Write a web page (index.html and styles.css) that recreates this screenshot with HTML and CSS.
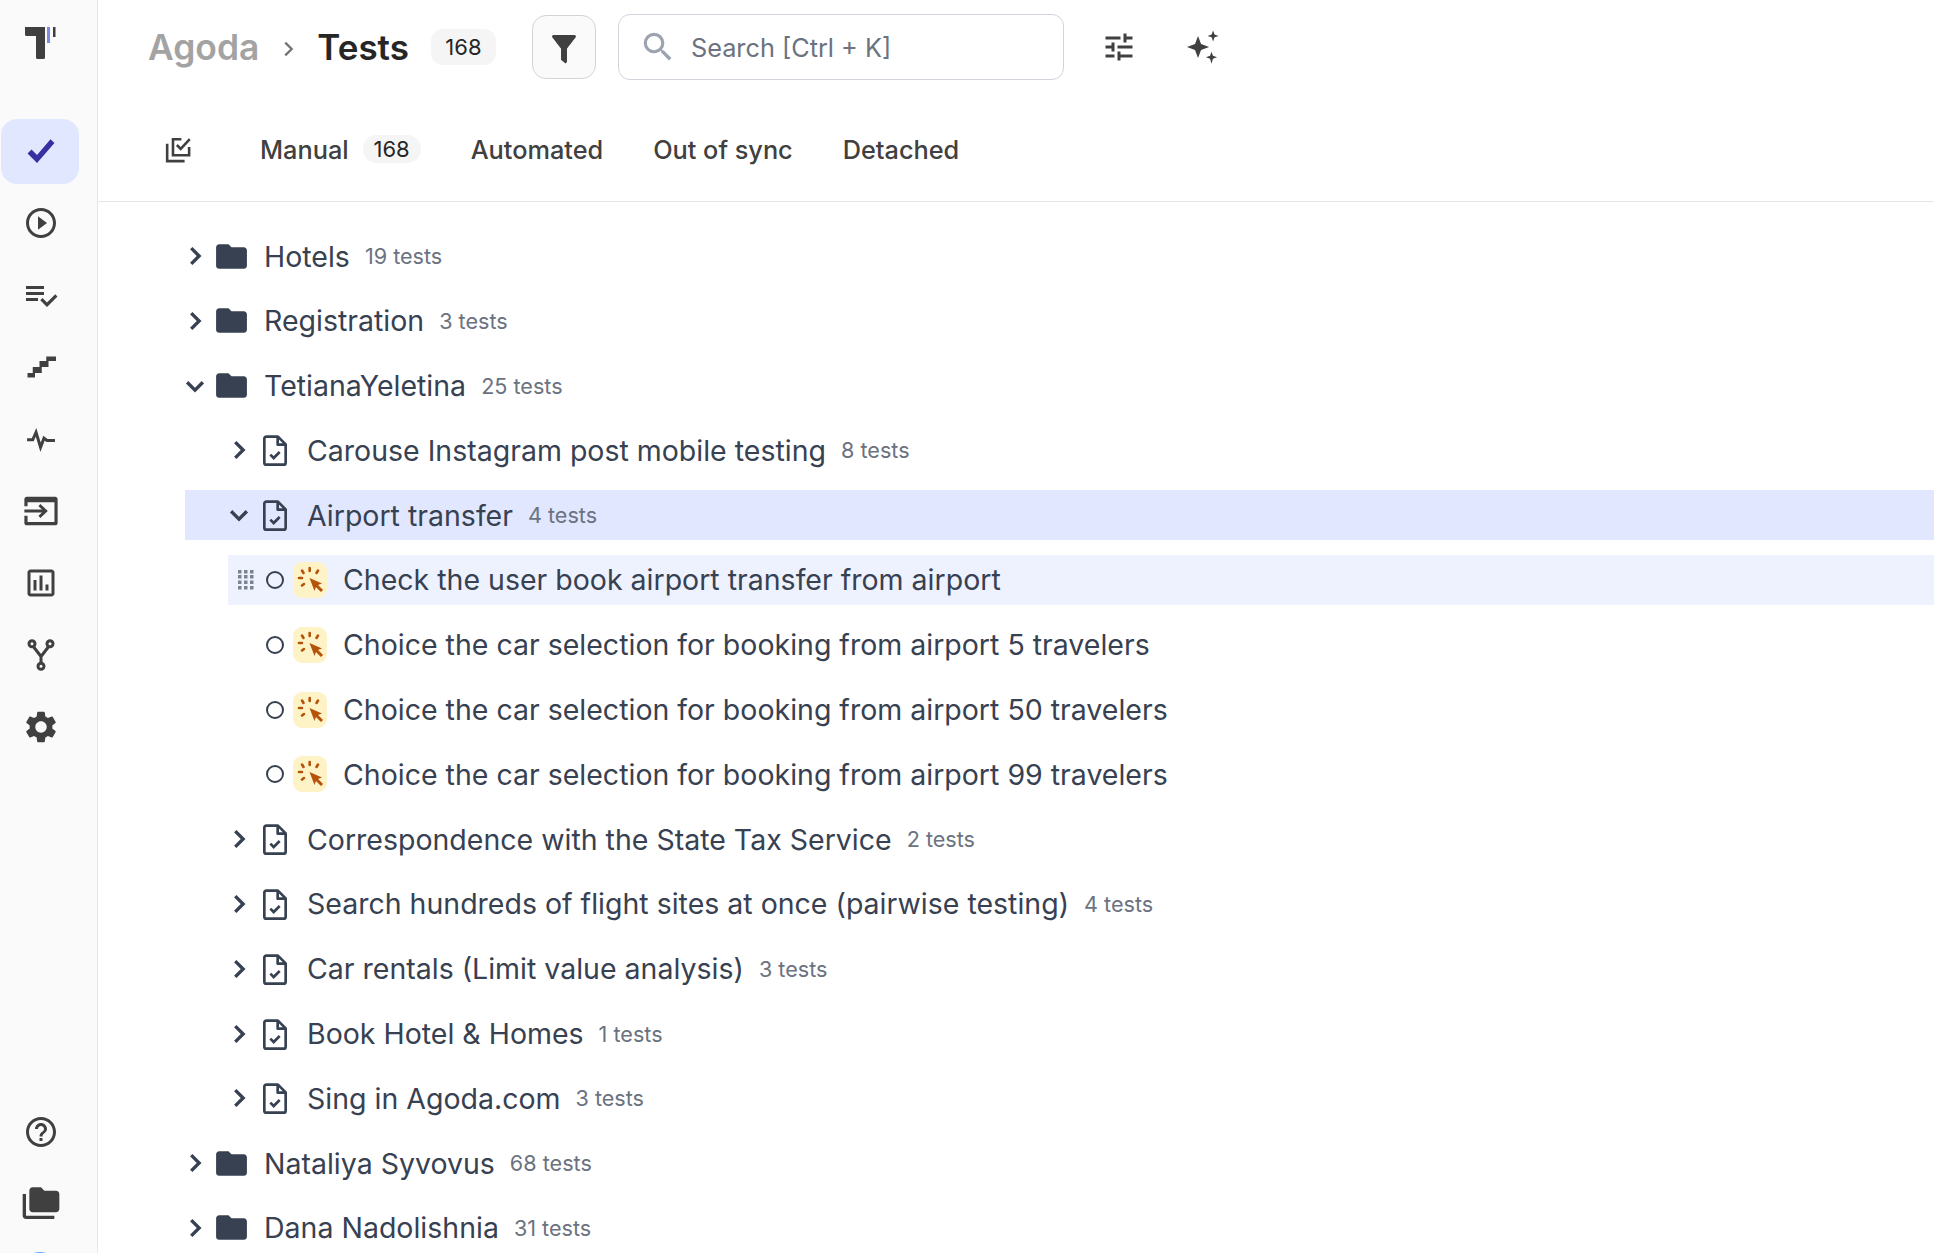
FILE: index.html
```html
<!DOCTYPE html>
<html lang="en">
<head>
    <meta charset="UTF-8">
    <title>Tests - Agoda</title>
    <link rel="stylesheet" href="styles.css">
</head>
<body>
    <!-- icons used more than once -->
    <svg class="sprite" xmlns="http://www.w3.org/2000/svg">
        <symbol id="i-right" viewBox="0 0 24 24"><path d="M9 5.700 15.300 12 9 18.300" fill="none" stroke="currentColor" stroke-width="2.700"/></symbol>
        <symbol id="i-down" viewBox="0 0 24 24"><path d="M5.700 9 12 15.300 18.300 9" fill="none" stroke="currentColor" stroke-width="2.700"/></symbol>
        <symbol id="i-folder" viewBox="0 0 24 24"><path d="M10 4H4c-1.100 0-1.990.9-1.990 2L2 18c0 1.100.9 2 2 2h16c1.100 0 2-.9 2-2V8c0-1.100-.9-2-2-2h-8l-2-2z" fill="currentColor"/></symbol>
        <symbol id="i-suite" viewBox="0 0 24 24"><path d="M4 3.500C4 2.700 4.700 2 5.500 2h8.700L20 7.800v13.700c0 .8-.7 1.500-1.500 1.500h-13C4.700 23 4 22.300 4 21.500z M14 2v6h6" fill="none" stroke="currentColor" stroke-width="2" stroke-linejoin="round"/><path d="m8.500 15.500 2.500 2.500 4.500-4.500" fill="none" stroke="currentColor" stroke-width="2"/></symbol>
        <symbol id="i-click" viewBox="0 0 34 36">
            <rect width="34" height="36" rx="9" fill="#fef3c7"/>
            <path d="M16.500 16 29 21.500l-5.500 2-2 5.500z" fill="#b45309"/>
            <path d="M23 23l6 6" stroke="#b45309" stroke-width="3"/>
            <path d="M16.700 6v3M9 8.500l1.500 2.500M25 8.500 23.500 11M6 16h3M9 23.500l2-1.500" stroke="#b45309" stroke-width="2.600" stroke-linecap="round" fill="none"/>
        </symbol>
    </svg>

    <div class="app">
        <!-- menu -->
        <div class="sidebar">
            <div class="logo">
                <svg width="36" height="36" viewBox="0 0 36 36">
                    <path d="M3 4h20v30.500a1.500 1.500 0 0 1-1.500 1.500h-6a1.500 1.500 0 0 1-1.500-1.500V13H4.500A1.500 1.500 0 0 1 3 11.500z" fill="#3f3f3f"/>
                    <rect x="25" y="4" width="3" height="16" fill="#7f8ae6"/>
                    <rect x="31" y="4" width="2.500" height="10" fill="#3f3f3f"/>
                </svg>
            </div>
            <div class="nav-item active">
                <svg width="38" height="38" viewBox="0 0 24 24"><path d="M3.500 13.500 6 11l3.500 3.500L18 4.500 20.500 7l-11 12.500z" fill="currentColor"/></svg>
            </div>
            <div class="nav-item">
                <svg width="36" height="36" viewBox="0 0 24 24"><path d="M10 16.500l6-4.500-6-4.500v9zM12 2C6.480 2 2 6.480 2 12s4.480 10 10 10 10-4.480 10-10S17.520 2 12 2zm0 18c-4.410 0-8-3.590-8-8s3.590-8 8-8 8 3.590 8 8-3.590 8-8 8z" fill="currentColor"/></svg>
            </div>
            <div class="nav-item">
                <svg width="36" height="36" viewBox="0 0 24 24"><path d="M14 10H2v2h12v-2zm0-4H2v2h12V6zM2 16h8v-2H2v2zm19.500-4.500L23 13l-6.990 7-4.510-4.500L13 14l3.010 3 5.490-5.500z" fill="currentColor"/></svg>
            </div>
            <div class="nav-item">
                <svg width="36" height="36" viewBox="0 0 24 24"><path d="M22 5v3h-5v4h-4.500v4H8v3H3v-3h3.500v-4H11V8h4.500V5z" fill="currentColor"/></svg>
            </div>
            <div class="nav-item">
                <svg width="36" height="36" viewBox="0 0 24 24"><path d="M2.700 12.500h3.800l2.200-5 3 10 2.300-6 2 1.500h5.300" fill="none" stroke="currentColor" stroke-width="2"/></svg>
            </div>
            <div class="nav-item">
                <svg width="38" height="38" viewBox="0 0 24 24"><path d="M1.500 9V4.500c0-.8.700-1.500 1.500-1.500h18c.8 0 1.500.7 1.500 1.500v15c0 .8-.7 1.500-1.500 1.500H3c-.8 0-1.500-.7-1.500-1.500V15h2v4h17V6.500h-17V9z" fill="currentColor"/><path d="M1.500 12H15M11 8.300l4 3.700-4 3.700" fill="none" stroke="currentColor" stroke-width="1.800"/></svg>
            </div>
            <div class="nav-item">
                <svg width="36" height="36" viewBox="0 0 24 24"><path d="M9 17H7v-7h2v7zm4 0h-2V7h2v10zm4 0h-2v-4h2v4zm2 2H5V5h14v14zm0-16H5c-1.100 0-2 .9-2 2v14c0 1.100.9 2 2 2h14c1.100 0 2-.9 2-2V5c0-1.100-.9-2-2-2z" fill="currentColor"/></svg>
            </div>
            <div class="nav-item">
                <svg width="36" height="36" viewBox="0 0 24 24"><g fill="none" stroke="currentColor" stroke-width="2"><circle cx="6" cy="4.500" r="2"/><circle cx="18" cy="4.500" r="2"/><circle cx="12" cy="19.500" r="2"/><path d="M7 6.500l5 6.500 5-6.500M12 13v4.500"/></g></svg>
            </div>
            <div class="nav-item">
                <svg width="38" height="38" viewBox="0 0 24 24"><path d="M19.140 12.940c.04-.3.06-.61.06-.94 0-.32-.02-.64-.07-.94l2.030-1.580c.18-.14.23-.41.12-.61l-1.920-3.320c-.12-.22-.37-.29-.59-.22l-2.390.96c-.5-.38-1.030-.7-1.620-.94l-.36-2.540c-.04-.24-.24-.41-.48-.41h-3.840c-.24 0-.43.17-.47.41l-.36 2.540c-.59.24-1.130.57-1.620.94l-2.390-.96c-.22-.08-.47 0-.59.22L2.740 8.870c-.12.21-.08.47.12.61l2.030 1.580c-.05.3-.09.63-.09.94s.02.64.07.94l-2.030 1.580c-.18.14-.23.41-.12.61l1.920 3.320c.12.22.37.29.59.22l2.390-.96c.5.38 1.030.7 1.620.94l.36 2.540c.05.24.24.41.48.41h3.840c.24 0 .44-.17.47-.41l.36-2.540c.59-.24 1.130-.56 1.620-.94l2.390.96c.22.08.47 0 .59-.22l1.920-3.320c.12-.22.07-.47-.12-.61l-2.010-1.580zM12 15.600c-1.980 0-3.600-1.620-3.600-3.600s1.620-3.600 3.600-3.600 3.600 1.620 3.600 3.600-1.620 3.600-3.600 3.600z" fill="currentColor"/></svg>
            </div>
            <div class="nav-bottom">
                <div class="nav-item">
                    <svg width="36" height="36" viewBox="0 0 24 24"><path d="M11 18h2v-2h-2v2zm1-16C6.480 2 2 6.480 2 12s4.480 10 10 10 10-4.480 10-10S17.520 2 12 2zm0 18c-4.410 0-8-3.590-8-8s3.590-8 8-8 8 3.590 8 8-3.590 8-8 8zm0-14c-2.210 0-4 1.790-4 4h2c0-1.100.9-2 2-2s2 .9 2 2c0 2-3 1.750-3 5h2c0-2.250 3-2.500 3-5 0-2.210-1.790-4-4-4z" fill="currentColor"/></svg>
                </div>
                <div class="nav-item">
                    <svg width="40" height="40" viewBox="0 0 24 24"><path d="M3 19h17v2H3c-1.100 0-2-.9-2-2V6h2v13zM23 6v9c0 1.100-.9 2-2 2H7c-1.100 0-2-.9-2-2l.01-11c0-1.100.89-2 1.990-2h5l2 2h7c1.100 0 2 .9 2 2z" fill="currentColor"/></svg>
                </div>
                <div class="avatar"></div>
            </div>
        </div>

        <div class="main">
            <!-- title and search -->
            <div class="header">
                <span class="crumb">Agoda</span>
                <svg class="crumb-sep" width="22" height="22" viewBox="0 0 24 24"><path d="M9 5l7 7-7 7" fill="none" stroke="currentColor" stroke-width="2.500"/></svg>
                <span class="title">Tests</span>
                <span class="badge badge-title">168</span>
                <button class="filter-btn">
                    <svg width="36" height="36" viewBox="0 0 24 24"><path d="M4.250 5.610C6.270 8.200 10 13 10 13v7.500l3 2.500 1-1v-9s3.720-4.800 5.740-7.390A.998.998 0 0 0 18.950 4H5.040c-.83 0-1.300.95-.79 1.610z" fill="currentColor"/></svg>
                </button>
                <div class="search">
                    <svg width="38" height="38" viewBox="0 0 24 24"><path d="M15.500 14h-.79l-.28-.27A6.471 6.471 0 0 0 16 9.500 6.500 6.500 0 1 0 9.500 16c1.610 0 3.090-.59 4.230-1.570l.27.28v.79l5 4.990L20.490 19l-4.990-5zm-6 0C7.010 14 5 11.990 5 9.500S7.010 5 9.500 5 14 7.010 14 9.500 11.990 14 9.500 14z" fill="currentColor"/></svg>
                    <span>Search [Ctrl + K]</span>
                </div>
                <svg class="tool tool-tune" width="36" height="36" viewBox="0 0 24 24"><path d="M3 17v2h6v-2H3zM3 5v2h10V5H3zm10 16v-2h8v-2h-8v-2h-2v6h2zM7 9v2H3v2h4v2h2V9H7zm14 4v-2H11v2h10zm-6-4h2V7h4V5h-4V3h-2v6z" fill="currentColor"/></svg>
                <svg class="tool tool-stars" width="38" height="38" viewBox="0 0 24 24"><path d="M9.500 5l1.900 5.100 5.100 1.900-5.100 1.900L9.500 19l-1.900-5.100L2.500 12l5.100-1.900zM19 1.500l.9 2.600 2.600.9-2.600.9-.9 2.600-.9-2.600-2.600-.9 2.600-.9zM18 15l.9 2.600 2.600.9-2.600.9-.9 3.100-.9-3.100-2.600-.9 2.600-.9z" fill="currentColor"/></svg>
            </div>

            <!-- tabs -->
            <div class="tabs">
                <svg class="tabs-icon" width="31" height="31" viewBox="0 0 24 24"><g fill="none" stroke="currentColor" stroke-width="2"><path d="M15 4H8.500v12.500H21V10"/><path d="M11.500 8.500l3 3L21.500 4"/><path d="M4 7.500V21h13.500"/></g></svg>
                <span class="tab">Manual <span class="badge badge-tab">168</span></span>
                <span class="tab">Automated</span>
                <span class="tab">Out of sync</span>
                <span class="tab">Detached</span>
            </div>

            <!-- tree -->
            <div class="tree">
                <div class="row lvl-0">
                    <svg class="chev"><use href="#i-right"/></svg>
                    <svg class="folder"><use href="#i-folder"/></svg>
                    <span class="name">Hotels</span><span class="count">19 tests</span>
                </div>
                <div class="row lvl-0">
                    <svg class="chev"><use href="#i-right"/></svg>
                    <svg class="folder"><use href="#i-folder"/></svg>
                    <span class="name">Registration</span><span class="count">3 tests</span>
                </div>
                <div class="row lvl-0">
                    <svg class="chev"><use href="#i-down"/></svg>
                    <svg class="folder"><use href="#i-folder"/></svg>
                    <span class="name">TetianaYeletina</span><span class="count">25 tests</span>
                </div>
                <div class="row lvl-1">
                    <svg class="chev"><use href="#i-right"/></svg>
                    <svg class="suite"><use href="#i-suite"/></svg>
                    <span class="name">Carouse Instagram post mobile testing</span><span class="count">8 tests</span>
                </div>
                <div class="row lvl-1 selected">
                    <svg class="chev"><use href="#i-down"/></svg>
                    <svg class="suite"><use href="#i-suite"/></svg>
                    <span class="name">Airport transfer</span><span class="count">4 tests</span>
                </div>
                <div class="row lvl-2 current">
                    <svg class="grip" width="18" height="21" viewBox="0 0 18 21" fill="#7b8290">
                        <rect x="1" y="1" width="3.500" height="3.500"/><rect x="7" y="1" width="3.500" height="3.500"/><rect x="13" y="1" width="3.500" height="3.500"/>
                        <rect x="1" y="6" width="3.500" height="3.500"/><rect x="7" y="6" width="3.500" height="3.500"/><rect x="13" y="6" width="3.500" height="3.500"/>
                        <rect x="1" y="11.500" width="3.500" height="3.500"/><rect x="7" y="11.500" width="3.500" height="3.500"/><rect x="13" y="11.500" width="3.500" height="3.500"/>
                        <rect x="1" y="17" width="3.500" height="3.500"/><rect x="7" y="17" width="3.500" height="3.500"/><rect x="13" y="17" width="3.500" height="3.500"/>
                    </svg>
                    <span class="status"></span>
                    <svg class="click"><use href="#i-click"/></svg>
                    <span class="name">Check the user book airport transfer from airport</span>
                </div>
                <div class="row lvl-2">
                    <span class="status"></span>
                    <svg class="click"><use href="#i-click"/></svg>
                    <span class="name">Choice the car selection for booking from airport 5 travelers</span>
                </div>
                <div class="row lvl-2">
                    <span class="status"></span>
                    <svg class="click"><use href="#i-click"/></svg>
                    <span class="name">Choice the car selection for booking from airport 50 travelers</span>
                </div>
                <div class="row lvl-2">
                    <span class="status"></span>
                    <svg class="click"><use href="#i-click"/></svg>
                    <span class="name">Choice the car selection for booking from airport 99 travelers</span>
                </div>
                <div class="row lvl-1">
                    <svg class="chev"><use href="#i-right"/></svg>
                    <svg class="suite"><use href="#i-suite"/></svg>
                    <span class="name">Correspondence with the State Tax Service</span><span class="count">2 tests</span>
                </div>
                <div class="row lvl-1">
                    <svg class="chev"><use href="#i-right"/></svg>
                    <svg class="suite"><use href="#i-suite"/></svg>
                    <span class="name">Search hundreds of flight sites at once (pairwise testing)</span><span class="count">4 tests</span>
                </div>
                <div class="row lvl-1">
                    <svg class="chev"><use href="#i-right"/></svg>
                    <svg class="suite"><use href="#i-suite"/></svg>
                    <span class="name">Car rentals (Limit value analysis)</span><span class="count">3 tests</span>
                </div>
                <div class="row lvl-1">
                    <svg class="chev"><use href="#i-right"/></svg>
                    <svg class="suite"><use href="#i-suite"/></svg>
                    <span class="name">Book Hotel &amp; Homes</span><span class="count">1 tests</span>
                </div>
                <div class="row lvl-1">
                    <svg class="chev"><use href="#i-right"/></svg>
                    <svg class="suite"><use href="#i-suite"/></svg>
                    <span class="name">Sing in Agoda.com</span><span class="count">3 tests</span>
                </div>
                <div class="row lvl-0">
                    <svg class="chev"><use href="#i-right"/></svg>
                    <svg class="folder"><use href="#i-folder"/></svg>
                    <span class="name">Nataliya Syvovus</span><span class="count">68 tests</span>
                </div>
                <div class="row lvl-0">
                    <svg class="chev"><use href="#i-right"/></svg>
                    <svg class="folder"><use href="#i-folder"/></svg>
                    <span class="name">Dana Nadolishnia</span><span class="count">31 tests</span>
                </div>
            </div>
        </div>
    </div>
</body>
</html>
```

FILE: styles.css
```css
* {
    margin: 0px;
    padding: 0px;
    box-sizing: border-box;
}
html, body {
    height: 100%;
    overflow: hidden;
}
body {
    font-family: "Inter", "Liberation Sans", sans-serif;
    color: #374151;
    background-color: white;
}
.sprite {
    display: none;
}
.app {
    display: flex;
    height: 100%;
}

/* sidebar */
.sidebar {
    display: flex;
    flex-direction: column;
    align-items: center;
    flex: none;
    width: 98px;
    padding-top: 23px;
    padding-right: 17px;
    background-color: #fafafa;
    border-right: 1px solid #e5e7eb;
    color: #404040;
}
.logo {
    height: 96px;
}
.nav-item {
    display: flex;
    align-items: center;
    justify-content: center;
    flex: none;
    width: 78px;
    height: 65px;
    margin-bottom: 7px;
    padding-left: 2px;
    padding-bottom: 2px;
}
.nav-item.active {
    background-color: #e0e7ff;
    border-radius: 16px;
    color: #3730a3;
}
.nav-bottom {
    margin-top: auto;
    position: relative;
    height: 153px;
}
.avatar {
    position: absolute;
    left: 19px;
    top: 152px;
    width: 40px;
    height: 40px;
    border-radius: 50%;
    background-color: #60a5fa;
}

/* header */
.main {
    flex: 1;
    min-width: 0;
    display: flex;
    flex-direction: column;
}
.header {
    display: flex;
    align-items: center;
    height: 94px;
    padding-left: 50px;
}
.crumb {
    font-size: 35.4px;
    font-weight: 600;
    color: #a3a3a3;
}
.crumb-sep {
    margin: 4px 18px 0px 18px;
    color: #737373;
}
.title {
    font-size: 35px;
    font-weight: 600;
    color: #262626;
}
.badge {
    display: inline-flex;
    align-items: center;
    justify-content: center;
    background-color: #f5f5f5;
    color: #262626;
    font-size: 22px;
}
.badge-title {
    width: 65px;
    height: 36px;
    margin-left: 22px;
    border-radius: 12px;
}
.filter-btn {
    display: flex;
    align-items: center;
    justify-content: center;
    width: 64px;
    height: 64px;
    margin-left: 36px;
    background-color: #fafafa;
    border: 1px solid #d4d4d8;
    border-radius: 14px;
    color: #404040;
}
.search {
    display: flex;
    align-items: center;
    gap: 14px;
    width: 446px;
    height: 66px;
    margin-left: 22px;
    padding-left: 20px;
    border: 1px solid #d1d5db;
    border-radius: 12px;
    color: #6b7280;
    font-size: 25.3px;
}
.search svg {
    color: #9ca3af;
}
.tool {
    color: #404040;
}
.tool-tune {
    margin-left: 37px;
}
.tool-stars {
    margin-left: 46px;
}

/* tabs */
.tabs {
    display: flex;
    align-items: center;
    height: 108px;
    padding-left: 64px;
    padding-top: 3px;
    border-bottom: 1px solid #e5e7eb;
}
.tabs-icon {
    color: #404040;
    margin-right: 67px;
}
.tab {
    display: flex;
    align-items: center;
    gap: 14px;
    margin-right: 50px;
    font-size: 25.3px;
    font-weight: 500;
    color: #404040;
}
.badge-tab {
    width: 58px;
    height: 28px;
    border-radius: 14px;
    font-weight: 400;
}

/* tree */
.tree {
    display: flex;
    flex-direction: column;
    gap: 14.8px;
    padding-top: 29px;
}
.row {
    display: flex;
    align-items: center;
    flex: none;
    height: 50px;
    font-size: 28.5px;
}
.lvl-0 {
    padding-left: 82px;
}
.lvl-1 {
    padding-left: 126px;
}
.lvl-2 {
    margin-left: 130px;
    padding-left: 38px;
}
.row.selected {
    margin-left: 87px;
    padding-left: 39px;
    background-color: #e0e7ff;
}
.row.current {
    padding-left: 9px;
    background-color: #eef2ff;
}
.chev {
    width: 30px;
    height: 30px;
    flex: none;
    color: #374151;
}
.folder {
    width: 37px;
    height: 37px;
    flex: none;
    margin-left: 3px;
    margin-right: 14px;
    color: #374151;
}
.suite {
    width: 32px;
    height: 32px;
    flex: none;
    margin-left: 5px;
    margin-right: 16px;
    color: #374151;
}
.grip {
    flex: none;
    margin-right: 11px;
}
.status {
    flex: none;
    width: 18px;
    height: 18px;
    border: 2px solid #374151;
    border-radius: 50%;
    margin-right: 9px;
}
.click {
    flex: none;
    width: 34px;
    height: 36px;
    margin-right: 16px;
}
.name {
    white-space: nowrap;
}
.count {
    margin-left: 15px;
    font-size: 21.6px;
    color: #6b7280;
}
```
